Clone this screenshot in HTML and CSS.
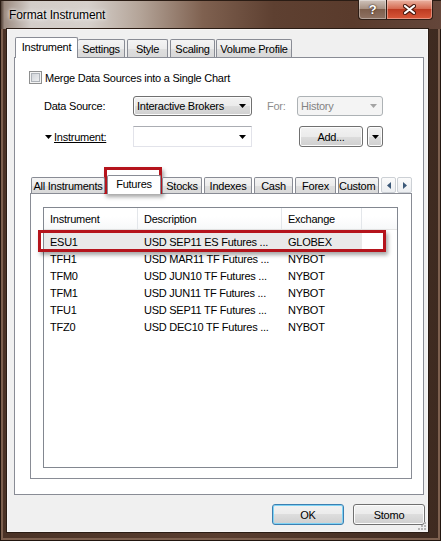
FILE: index.html
```
<!DOCTYPE html>
<html>
<head>
<meta charset="utf-8">
<title>Format Instrument</title>
<link rel="stylesheet" href="styles.css">
</head>
<body>
<div class="win">
  <div class="titlebar">
    <span class="title">Format Instrument</span>
    <div class="caps">
      <div class="cap cap-help">?</div>
      <div class="cap cap-close">
        <svg width="13" height="11" viewBox="0 0 13 11"><path d="M2 2 L11 9 M11 2 L2 9" stroke="#4a1a10" stroke-width="4.2" stroke-linecap="round"/><path d="M2 2 L11 9 M11 2 L2 9" stroke="#fff" stroke-width="2.2" stroke-linecap="round"/></svg>
      </div>
    </div>
  </div>
  <div class="mid">
    <div class="client">
      <div class="tabs">
        <div class="tab sel t-instr">Instrument</div>
        <div class="tab t-set">Settings</div>
        <div class="tab t-style">Style</div>
        <div class="tab t-scal">Scaling</div>
        <div class="tab t-vol">Volume Profile</div>
      </div>
      <div class="panel">
        <div class="check-row">
          <span class="checkbox"></span>
          <span class="check-lbl">Merge Data Sources into a Single Chart</span>
        </div>
        <div class="form-row row1">
          <span class="lbl">Data Source:</span>
          <div class="combo combo-btn"><span class="combo-text">Interactive Brokers</span><svg class="arr" width="7" height="4" viewBox="0 0 7 4"><path d="M0 0h7L3.5 4z" fill="#000"/></svg></div>
          <span class="lbl for-lbl">For:</span>
          <div class="combo combo-dis"><span class="combo-text">History</span><svg class="arr" width="7" height="4" viewBox="0 0 7 4"><path d="M0 0h7L3.5 4z" fill="#a3a3a3"/></svg></div>
        </div>
        <div class="form-row row2">
          <span class="lbl lbl-instr"><svg class="lbl-arr" width="7" height="4" viewBox="0 0 7 4"><path d="M0 0h7L3.5 4z" fill="#000"/></svg><u>Instrument:</u></span>
          <div class="combo combo-white"><span class="combo-text"></span><svg class="arr" width="7" height="4" viewBox="0 0 7 4"><path d="M0 0h7L3.5 4z" fill="#000"/></svg></div>
          <div class="btn add-btn">Add...</div>
          <div class="btn arrow-btn"><svg width="7" height="4" viewBox="0 0 7 4"><path d="M0 0h7L3.5 4z" fill="#000"/></svg></div>
        </div>
        <div class="itabs">
          <div class="itab i-all">All Instruments</div>
          <div class="itab sel i-fut">Futures</div>
          <div class="itab i-stk">Stocks</div>
          <div class="itab i-idx">Indexes</div>
          <div class="itab i-cash">Cash</div>
          <div class="itab i-fx">Forex</div>
          <div class="itab i-cus">Custom</div>
          <div class="scrollers">
            <div class="scr"><svg width="4" height="7" viewBox="0 0 4 7"><path d="M4 0v7L0 3.5z" fill="#3b5878"/></svg></div>
            <div class="scr"><svg width="4" height="7" viewBox="0 0 4 7"><path d="M0 0v7L4 3.5z" fill="#3b5878"/></svg></div>
          </div>
        </div>
        <div class="ipanel">
          <div class="list">
            <div class="lhead">
              <div class="hc c1">Instrument</div>
              <div class="hc c2">Description</div>
              <div class="hc c3">Exchange</div>
              <div class="hc c4"></div>
            </div>
            <div class="lrows">
              <div class="lrow selrow"><div class="cell c1">ESU1</div><div class="cell c2">USD SEP11 ES Futures ...</div><div class="cell c3">GLOBEX</div></div>
              <div class="lrow"><div class="cell c1">TFH1</div><div class="cell c2">USD MAR11 TF Futures ...</div><div class="cell c3">NYBOT</div></div>
              <div class="lrow"><div class="cell c1">TFM0</div><div class="cell c2">USD JUN10 TF Futures ...</div><div class="cell c3">NYBOT</div></div>
              <div class="lrow"><div class="cell c1">TFM1</div><div class="cell c2">USD JUN11 TF Futures ...</div><div class="cell c3">NYBOT</div></div>
              <div class="lrow"><div class="cell c1">TFU1</div><div class="cell c2">USD SEP11 TF Futures ...</div><div class="cell c3">NYBOT</div></div>
              <div class="lrow"><div class="cell c1">TFZ0</div><div class="cell c2">USD DEC10 TF Futures ...</div><div class="cell c3">NYBOT</div></div>
            </div>
          </div>
        </div>
      </div>
      <div class="dlg-buttons">
        <div class="btn btn-ok">OK</div>
        <div class="btn btn-cancel">Stomo</div>
      </div>
      <svg class="grip" width="8" height="8" viewBox="0 0 8 8"><g fill="#b5b5b5"><rect x="6" y="0" width="2" height="2"/><rect x="3" y="3" width="2" height="2"/><rect x="6" y="3" width="2" height="2"/><rect x="0" y="6" width="2" height="2"/><rect x="3" y="6" width="2" height="2"/><rect x="6" y="6" width="2" height="2"/></g></svg>
    </div>
  </div>
  <div class="mark mark-tab"></div>
  <div class="mark mark-row"></div>
</div>
</body>
</html>
```
FILE: styles.css
```
* { box-sizing: border-box; }
html, body { margin: 0; padding: 0; }
body {
  width: 441px;
  height: 541px;
  overflow: hidden;
  background: #3a281e;
  font-family: "Liberation Sans", Arial, sans-serif;
  font-size: 11px;
  letter-spacing: -0.25px;
  color: #000;
}
.win {
  position: relative;
  width: 441px;
  height: 541px;
  display: flex;
  flex-direction: column;
  background: linear-gradient(90deg, #4a3226 0%, #5a3e30 50%, #3e2a20 100%);
  box-shadow: inset 0 0 0 1px #22160f, inset 0 0 0 3px #7d604f;
}
.titlebar {
  height: 29px;
  flex: none;
  display: flex;
  justify-content: space-between;
  align-items: flex-start;
  background: linear-gradient(90deg, #3a2a20 0%, #9c8b80 1%, #d3cdc8 7%, #d6d0cb 20%, #b3a397 32%, #7f6150 46%, #5e4031 62%, #5a3b2c 80%, #64463a 100%);
  box-shadow: inset 0 1px 0 #2a1c14, inset 1px 0 0 #2a1c14;
}
.title {
  padding: 8px 0 0 9px;
  font-size: 12px;
  line-height: 14px;
  letter-spacing: -0.1px;
  color: #000;
  text-shadow: 0 0 6px #fff, 0 0 3px #fff;
}
.caps {
  display: flex;
  margin-right: 8px;
}
.cap {
  height: 20px;
  display: flex;
  align-items: center;
  justify-content: center;
  border: 1px solid #2e1e16;
  border-top: 0;
}
.cap-help {
  width: 28px;
  border-radius: 0 0 0 4px;
  border-right: 0;
  background: linear-gradient(#cfc3bb 0%, #a89283 45%, #7d5e4c 50%, #8f7364 100%);
  box-shadow: inset 0 0 0 1px rgba(255,255,255,0.35);
  color: #fff;
  font-weight: bold;
  font-size: 13px;
  text-shadow: 0 0 2px #3a2418, 0 0 1px #3a2418;
}
.cap-close {
  width: 47px;
  border-radius: 0 0 4px 0;
  background: linear-gradient(#eab3a2 0%, #d66b52 45%, #bd3b22 50%, #d8583a 100%);
  box-shadow: inset 0 0 0 1px rgba(255,220,210,0.45);
}
.mid {
  height: 503px;
  flex: none;
  display: flex;
  padding-left: 7px;
}
.client {
  position: relative;
  width: 421px;
  height: 503px;
  background: #f0f0f0;
  border: 1px solid #f7f5f4;
  box-shadow: 0 0 0 1px #2a1c14;
  padding: 7px 2px 0 6px;
}
/* outer tabs */
.tabs {
  position: relative;
  z-index: 1;
  display: flex;
  align-items: flex-end;
  height: 21px;
  padding-left: 1px;
}
.tab {
  height: 18px;
  margin-bottom: 1px;
  margin-left: 2px;
  border: 1px solid #898c95;
  border-bottom: 0;
  border-radius: 2px 2px 0 0;
  background: linear-gradient(#f4f4f4 0%, #ececec 50%, #dfdfdf 50%, #d9d9d9 100%);
  display: flex;
  align-items: center;
  justify-content: center;
  padding-top: 1px;
}
.tab.sel {
  height: 21px;
  margin-bottom: 0;
  margin-left: 0;
  background: #fff;
  padding-top: 0;
  padding-bottom: 2px;
}
.t-instr { width: 63px; }
.t-set { width: 47px; margin-left: 0; border-left: 0; }
.t-style { width: 41px; }
.t-scal { width: 45px; }
.t-vol { width: 76px; margin-left: 1px; }
.panel {
  margin-top: -1px;
  width: 410px;
  height: 438px;
  border: 1px solid #898c95;
  background: #fff;
}
.check-row {
  display: flex;
  align-items: center;
  height: 13px;
  margin: 13px 0 0 14px;
}
.checkbox {
  width: 13px;
  height: 13px;
  border: 1px solid #8e8f8f;
  background: linear-gradient(135deg, #cbcfd5 0%, #e4e6e9 60%, #f4f4f4 100%);
  box-shadow: inset 0 0 0 1px #f4f4f4, inset 0 0 0 2px #aeb3b9;
}
.check-lbl { margin-left: 3px; }
.form-row {
  display: flex;
  align-items: center;
  margin-left: 29px;
}
.row1 { margin-top: 12px; height: 20px; }
.row2 { margin-top: 10px; height: 21px; }
.lbl { width: 89px; white-space: nowrap; }
.for-lbl { width: 30px; margin-left: 15px; color: #8d8d8d; }
.lbl-instr { display: flex; align-items: center; }
.lbl-arr { margin: 1px 2px 0 1px; }
.combo {
  position: relative;
  height: 20px;
  display: flex;
  align-items: center;
  justify-content: space-between;
  padding: 0 5px 0 3px;
}
.combo-btn {
  width: 119px;
  border: 1px solid #707070;
  border-radius: 3px;
  background: linear-gradient(#f2f2f2 0%, #ebebeb 50%, #dddddd 50%, #cfcfcf 100%);
  box-shadow: inset 0 0 0 1px #fcfcfc;
}
.combo-dis {
  width: 86px;
  border: 1px solid #adb2b5;
  border-radius: 3px;
  background: #f4f4f4;
  color: #838383;
}
.combo-white {
  width: 119px;
  height: 21px;
  border: 1px solid #e2e3ea;
  border-top-color: #abadb3;
  background: #fff;
}
.btn {
  display: flex;
  align-items: center;
  justify-content: center;
  border: 1px solid #707070;
  border-radius: 3px;
  background: linear-gradient(#f2f2f2 0%, #ebebeb 50%, #dddddd 50%, #cfcfcf 100%);
  box-shadow: inset 0 0 0 1px #fcfcfc;
}
.add-btn { width: 64px; height: 21px; margin-left: 47px; }
.arrow-btn { width: 16px; height: 21px; margin-left: 4px; }
/* inner tabs */
.itabs {
  position: relative;
  z-index: 1;
  display: flex;
  align-items: flex-end;
  width: 382px;
  height: 19px;
  margin: 28px 0 0 15px;
  padding-left: 1px;
}
.itab {
  height: 16px;
  margin-bottom: 1px;
  margin-left: 2px;
  border: 1px solid #898c95;
  border-bottom: 0;
  border-radius: 2px 2px 0 0;
  background: linear-gradient(#f4f4f4 0%, #ececec 50%, #dfdfdf 50%, #d9d9d9 100%);
  display: flex;
  align-items: center;
  justify-content: center;
  white-space: nowrap;
  overflow: hidden;
}
.itab.sel {
  height: 19px;
  margin-bottom: 0;
  background: #fff;
  padding-bottom: 2px;
}
.i-all { width: 74px; margin-left: 0; }
.i-fut { width: 54px; }
.i-stk { width: 40px; margin-left: 1px; }
.i-idx { width: 48px; }
.i-cash { width: 39px; }
.i-fx { width: 41px; }
.i-cus { width: 41px; justify-content: flex-start; padding-left: 0; }
.scrollers {
  display: flex;
  margin-left: auto;
  margin-bottom: 1px;
  height: 16px;
}
.scr {
  width: 15px;
  height: 16px;
  margin-left: 1px;
  border: 1px solid #ccd0d5;
  border-radius: 2px;
  background: linear-gradient(#fbfbfb, #eceef1);
  display: flex;
  align-items: center;
  justify-content: center;
}
.ipanel {
  margin: -1px 0 0 15px;
  width: 382px;
  height: 286px;
  border: 1px solid #898c95;
  background: #fff;
  padding: 13px 0 0 12px;
}
.list {
  width: 355px;
  height: 261px;
  border: 1px solid #828790;
  background: #fff;
}
.lhead {
  display: flex;
  height: 22px;
  background: linear-gradient(#ffffff 0%, #ffffff 40%, #f7f8f9 100%);
  border-bottom: 1px solid #e5e5e5;
}
.hc {
  display: flex;
  align-items: center;
  padding-left: 6px;
  border-right: 1px solid #e3e6ea;
  white-space: nowrap;
}
.c1 { width: 94px; }
.c2 { width: 144px; }
.c3 { width: 80px; }
.hc.c4 { flex: 1; border-right: 0; }
.lrows { padding-top: 3px; }
.lrow {
  display: flex;
  height: 17px;
  width: 318px;
}
.selrow { background: #e9e9e9; }
.cell {
  display: flex;
  align-items: center;
  padding-left: 6px;
  white-space: nowrap;
  overflow: hidden;
}
.dlg-buttons {
  display: flex;
  justify-content: flex-end;
  gap: 9px;
  margin-top: 9px;
}
.dlg-buttons .btn { width: 72px; height: 21px; }
.btn-ok {
  border-color: #3c7fb1;
  box-shadow: inset 0 0 0 1px #7fd3f5;
}
.grip {
  position: absolute;
  right: 1px;
  bottom: 1px;
}
/* red annotation boxes */
.mark {
  position: absolute;
  border: 3px solid #b5141c;
  box-shadow: 2px 3px 4px rgba(0,0,0,0.35);
  pointer-events: none;
}
.mark-tab { left: 104px; top: 167px; width: 58px; height: 27px; }
.mark-row { left: 38px; top: 230px; width: 348px; height: 22px; }
```
